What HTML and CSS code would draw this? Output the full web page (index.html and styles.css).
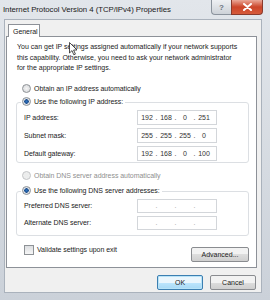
FILE: index.html
```html
<!DOCTYPE html>
<html lang="en">
<head>
    <meta charset="UTF-8">
    <title>Internet Protocol Version 4 (TCP/IPv4) Properties</title>
    <link rel="stylesheet" href="styles.css">
</head>
<body>

<div class="window">
    <!-- Title bar -->
    <div class="titlebar">
        <span class="title">Internet Protocol Version 4 (TCP/IPv4) Properties</span>
        <div class="controls">
            <span class="btn-help">?</span>
            <span class="btn-close">
                <svg width="9" height="8" viewBox="0 0 9 8"><path d="M1 1 L8 7 M8 1 L1 7" stroke="#fff" stroke-width="2" stroke-linecap="round"/></svg>
            </span>
        </div>
    </div>

    <div class="client">
        <div class="tabs">
            <span class="tab">General</span>
        </div>

        <div class="panel">
            <p class="intro">You can get IP settings assigned automatically if your network supports<br>this capability. Otherwise, you need to ask your network administrator<br>for the appropriate IP settings.</p>

            <div class="option"><span class="radio"></span>Obtain an IP address automatically</div>

            <div class="group">
                <div class="legend"><span class="radio checked"></span>Use the following IP address:</div>
                <div class="row">
                    <span>IP address:</span>
                    <div class="ip"><span>192</span><i>.</i><span>168</span><i>.</i><span>0</span><i>.</i><span>251</span></div>
                </div>
                <div class="row">
                    <span>Subnet mask:</span>
                    <div class="ip"><span>255</span><i>.</i><span>255</span><i>.</i><span>255</span><i>.</i><span>0</span></div>
                </div>
                <div class="row">
                    <span>Default gateway:</span>
                    <div class="ip"><span>192</span><i>.</i><span>168</span><i>.</i><span>0</span><i>.</i><span>100</span></div>
                </div>
            </div>

            <div class="option disabled"><span class="radio"></span>Obtain DNS server address automatically</div>

            <div class="group dns">
                <div class="legend"><span class="radio checked"></span>Use the following DNS server addresses:</div>
                <div class="row">
                    <span>Preferred DNS server:</span>
                    <div class="ip empty"><span></span><i>.</i><span></span><i>.</i><span></span><i>.</i><span></span></div>
                </div>
                <div class="row">
                    <span>Alternate DNS server:</span>
                    <div class="ip empty"><span></span><i>.</i><span></span><i>.</i><span></span><i>.</i><span></span></div>
                </div>
            </div>

            <div class="bottom-row">
                <div class="check"><span class="box"></span>Validate settings upon exit</div>
                <button class="btn">Advanced...</button>
            </div>
        </div>

        <div class="actions">
            <button class="btn ok">OK</button>
            <button class="btn">Cancel</button>
        </div>
    </div>

    <!-- mouse pointer -->
    <svg class="cursor" width="9" height="14" viewBox="0 0 9 14">
        <path d="M0.5 0.5 L0.5 11 L3 8.6 L4.8 12.8 L6.4 12.1 L4.6 8 L8 8 Z" fill="#fff" stroke="#222" stroke-width="0.8"/>
    </svg>
</div>

</body>
</html>
```

FILE: styles.css
```css
body {
    margin: 0;
    padding: 0;
    font-family: 'Liberation Sans', Arial, sans-serif;
    font-size: 7px;
    letter-spacing: -0.05px;
    color: #1a1a1a;
    background-color: #fff;
}
.window {
    position: relative;
    width: 270px;
    height: 300px;
    box-sizing: border-box;
    background: linear-gradient(#e2e6eb, #cbd1d9);
    display: flex;
    flex-direction: column;
    overflow: hidden;
}
.titlebar {
    height: 19px;
    display: flex;
    align-items: flex-start;
    padding-left: 3px;
}
.title {
    font-size: 7.8px;
    color: #1a1a1a;
    padding-top: 5px;
}
.controls {
    margin-left: auto;
    margin-right: 7px;
    display: flex;
}
.btn-help, .btn-close {
    height: 14px;
    display: flex;
    align-items: center;
    justify-content: center;
    border: 1px solid #8b939d;
    border-top: none;
}
.btn-help {
    width: 19px;
    background: linear-gradient(#eef0f3, #cdd2d8);
    border-radius: 0 0 0 4px;
    border-right: none;
    color: #6b7480;
    font-size: 8px;
    font-weight: bold;
}
.btn-close {
    width: 30px;
    background: linear-gradient(#eaa898, #cc4529 50%, #d65b3c);
    border-color: #8a3a2c;
    border-radius: 0 0 4px 0;
}
.client {
    margin: 0 8px 0 4px;
    height: 274px;
    box-sizing: border-box;
    background-color: #f0f0f0;
    border: 1px solid #aab2bc;
    padding: 4px 4px 0 1px;
}
.tabs {
    display: flex;
    padding-left: 2px;
}
.tab {
    width: 32px;
    height: 13px;
    box-sizing: border-box;
    background-color: #fff;
    border: 1px solid #8d9198;
    border-bottom: none;
    margin-bottom: -1px;
    position: relative;
    z-index: 1;
    padding: 3px 0 0 4px;
}
.panel {
    height: 232px;
    box-sizing: border-box;
    background-color: #fff;
    border: 1px solid #8d9198;
    padding: 5px 7px 0 9px;
}
.intro {
    margin: 0;
    line-height: 10.5px;
    padding-left: 1px;
    letter-spacing: 0;
    white-space: nowrap;
}
.option, .legend, .check {
    display: flex;
    align-items: center;
    height: 10px;
    white-space: nowrap;
}
.option {
    margin: 10px 0 0 6px;
}
.option.disabled {
    color: #8f8f8f;
    margin-top: 8px;
}
.radio {
    width: 7px;
    height: 7px;
    border-radius: 50%;
    border: 1px solid #8e9296;
    background: radial-gradient(#f4f4f4, #d3d5d8);
    margin-right: 3px;
    flex-shrink: 0;
}
.option.disabled .radio {
    border-color: #c4c6c8;
    background: #eceded;
}
.radio.checked {
    background: radial-gradient(circle, #2b74c4 0, #1f4f8c 2px, #e4e8ee 2.5px, #cdd3da 100%);
}
.group {
    border: 1px solid #dcdfe3;
    border-radius: 3px;
    height: 61px;
    margin-top: 8px;
    box-sizing: border-box;
    position: relative;
    padding: 7px 0 0 7px;
}
.group .legend {
    position: absolute;
    top: -6px;
    left: 4px;
    background-color: #fff;
    padding: 0 2px 0 1px;
}
.group.dns {
    height: 45px;
    margin-top: 10px;
}
.row {
    display: flex;
    align-items: center;
    justify-content: space-between;
    height: 15px;
    margin-bottom: 3px;
    padding-right: 31px;
}
.dns .row {
    height: 14px;
}
.ip {
    width: 80px;
    height: 15px;
    box-sizing: border-box;
    border: 1px solid #d3d6da;
    display: flex;
    align-items: center;
    padding-left: 1px;
    color: #333;
}
.dns .ip {
    height: 14px;
}
.ip span {
    width: 16px;
    text-align: center;
}
.ip i {
    font-style: normal;
    width: 3px;
    text-align: center;
}
.ip.empty i {
    color: #999;
}
.bottom-row {
    display: flex;
    align-items: flex-start;
    justify-content: space-between;
    margin-top: 11px;
    padding: 0 0 0 8px;
}
.check {
    margin-top: -2px;
}
.check .box {
    width: 8px;
    height: 8px;
    border: 1px solid #8e9296;
    background: linear-gradient(#dcdee1, #f6f6f6);
    margin-right: 3px;
}
.btn {
    font-family: 'Liberation Sans', Arial, sans-serif;
    font-size: 7px;
    color: #222;
    width: 58px;
    height: 15px;
    padding: 0;
    border: 1px solid #8a8c90;
    border-radius: 2px;
    background: linear-gradient(#f2f2f2 50%, #dddddd 50%, #cfcfcf);
}
.actions {
    display: flex;
    justify-content: flex-end;
    gap: 7px;
    margin-top: 7px;
    padding-right: 1px;
}
.actions .btn {
    width: 46px;
}
.btn.ok {
    border-color: #3c7fb1;
    background: linear-gradient(#eaf6fd 50%, #bee6fd 50%, #a7d9f5);
    box-shadow: inset 0 0 0 1px #b8e3f8;
}
.cursor {
    position: absolute;
    left: 69px;
    top: 42px;
}
```
